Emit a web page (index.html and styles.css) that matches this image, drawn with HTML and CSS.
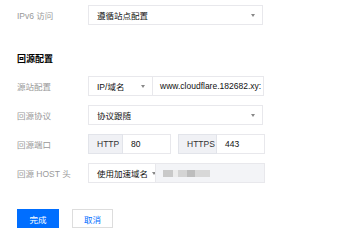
FILE: index.html
```
<!DOCTYPE html>
<html>
<head>
    <title>回源配置</title>
    <meta charset="UTF-8">
    <link rel="stylesheet" href="styles.css">
</head>
<body>
    <div class="form">
        <div class="form-row">
            <div class="label">IPv6 访问</div>
            <div class="select w-full">
                <span>遵循站点配置</span>
                <i class="arrow"></i>
            </div>
        </div>

        <h3 class="section-title">回源配置</h3>

        <div class="form-row">
            <div class="label">源站配置</div>
            <div class="group">
                <div class="select w-type">
                    <span>IP/域名</span>
                    <i class="arrow"></i>
                </div>
                <div class="input w-origin">www.cloudflare.182682.xy:</div>
            </div>
        </div>

        <div class="form-row">
            <div class="label">回源协议</div>
            <div class="select w-full">
                <span>协议跟随</span>
                <i class="arrow"></i>
            </div>
        </div>

        <div class="form-row">
            <div class="label">回源端口</div>
            <div class="group">
                <div class="addon w-http">HTTP</div>
                <div class="input w-port">80</div>
            </div>
            <div class="group port-gap">
                <div class="addon w-https">HTTPS</div>
                <div class="input w-port">443</div>
            </div>
        </div>

        <div class="form-row">
            <div class="label">回源 HOST 头</div>
            <div class="group">
                <div class="select w-host">
                    <span>使用加速域名</span>
                    <i class="arrow arrow-near"></i>
                </div>
                <div class="input disabled w-hostval">
                    <span class="masked"></span>
                </div>
            </div>
        </div>

        <div class="actions">
            <button class="btn btn-primary">完成</button>
            <button class="btn btn-default">取消</button>
        </div>
    </div>
</body>
</html>
```
FILE: styles.css
```
body {
    margin: 0;
    padding: 5px 0 0 17px;
    font-family: "Liberation Sans", "Noto Sans CJK SC", sans-serif;
    font-size: 8.5px;
    color: #222;
    background: #fff;
}
.form-row {
    display: flex;
    align-items: center;
    height: 20px;
    margin-bottom: 9px;
}
.label {
    width: 71px;
    flex-shrink: 0;
    color: #999;
}
.section-title {
    margin: 28px 0 11px;
    font-size: 9px;
    line-height: 12px;
    font-weight: bold;
    color: #000;
}
.group {
    display: flex;
    height: 20px;
}
.port-gap {
    margin-left: 7px;
}
.select,
.input,
.addon {
    box-sizing: border-box;
    height: 20px;
    display: flex;
    align-items: center;
    padding: 0 8px;
    border: 1px solid #e8e8ec;
    background: #fff;
    color: #111;
    white-space: nowrap;
    overflow: hidden;
}
.select {
    justify-content: space-between;
    padding-right: 7px;
}
.group > * + * {
    border-left: none;
}
.addon {
    background: #f0f1f5;
    color: #333;
    border-color: #e2e4ea;
}
.input.disabled {
    background: #f3f4f7;
}
.arrow {
    width: 0;
    height: 0;
    border-left: 2.5px solid transparent;
    border-right: 2.5px solid transparent;
    border-top: 3px solid #888;
}
.arrow-near {
    margin-left: 4px;
}
.masked {
    display: block;
    width: 47px;
    height: 7px;
    background: linear-gradient(90deg, #c9c9c9 0 22%, #ececec 22% 32%, #d4d4d4 32% 52%, #bdbdbd 52% 68%, #d8d8d8 68% 100%);
    filter: blur(0.6px);
}
.w-full { width: 175px; }
.w-type { width: 65px; }
.w-origin { width: 111px; padding-left: 7px; }
.w-http { width: 35px; }
.w-https { width: 39px; }
.w-port { width: 48px; }
.w-host { width: 68px; justify-content: flex-start; }
.w-hostval { width: 109px; padding-left: 7px; }
.actions {
    display: flex;
    gap: 13px;
    margin-top: 26px;
}
.btn {
    box-sizing: border-box;
    width: 42px;
    height: 19px;
    padding: 0;
    font-family: inherit;
    font-size: 8.5px;
    border: 1px solid #ddd;
    background: #fff;
    color: #006eff;
}
.btn-primary {
    background: #006eff;
    border-color: #006eff;
    color: #fff;
}
.btn-default {
    width: 41px;
}
```
